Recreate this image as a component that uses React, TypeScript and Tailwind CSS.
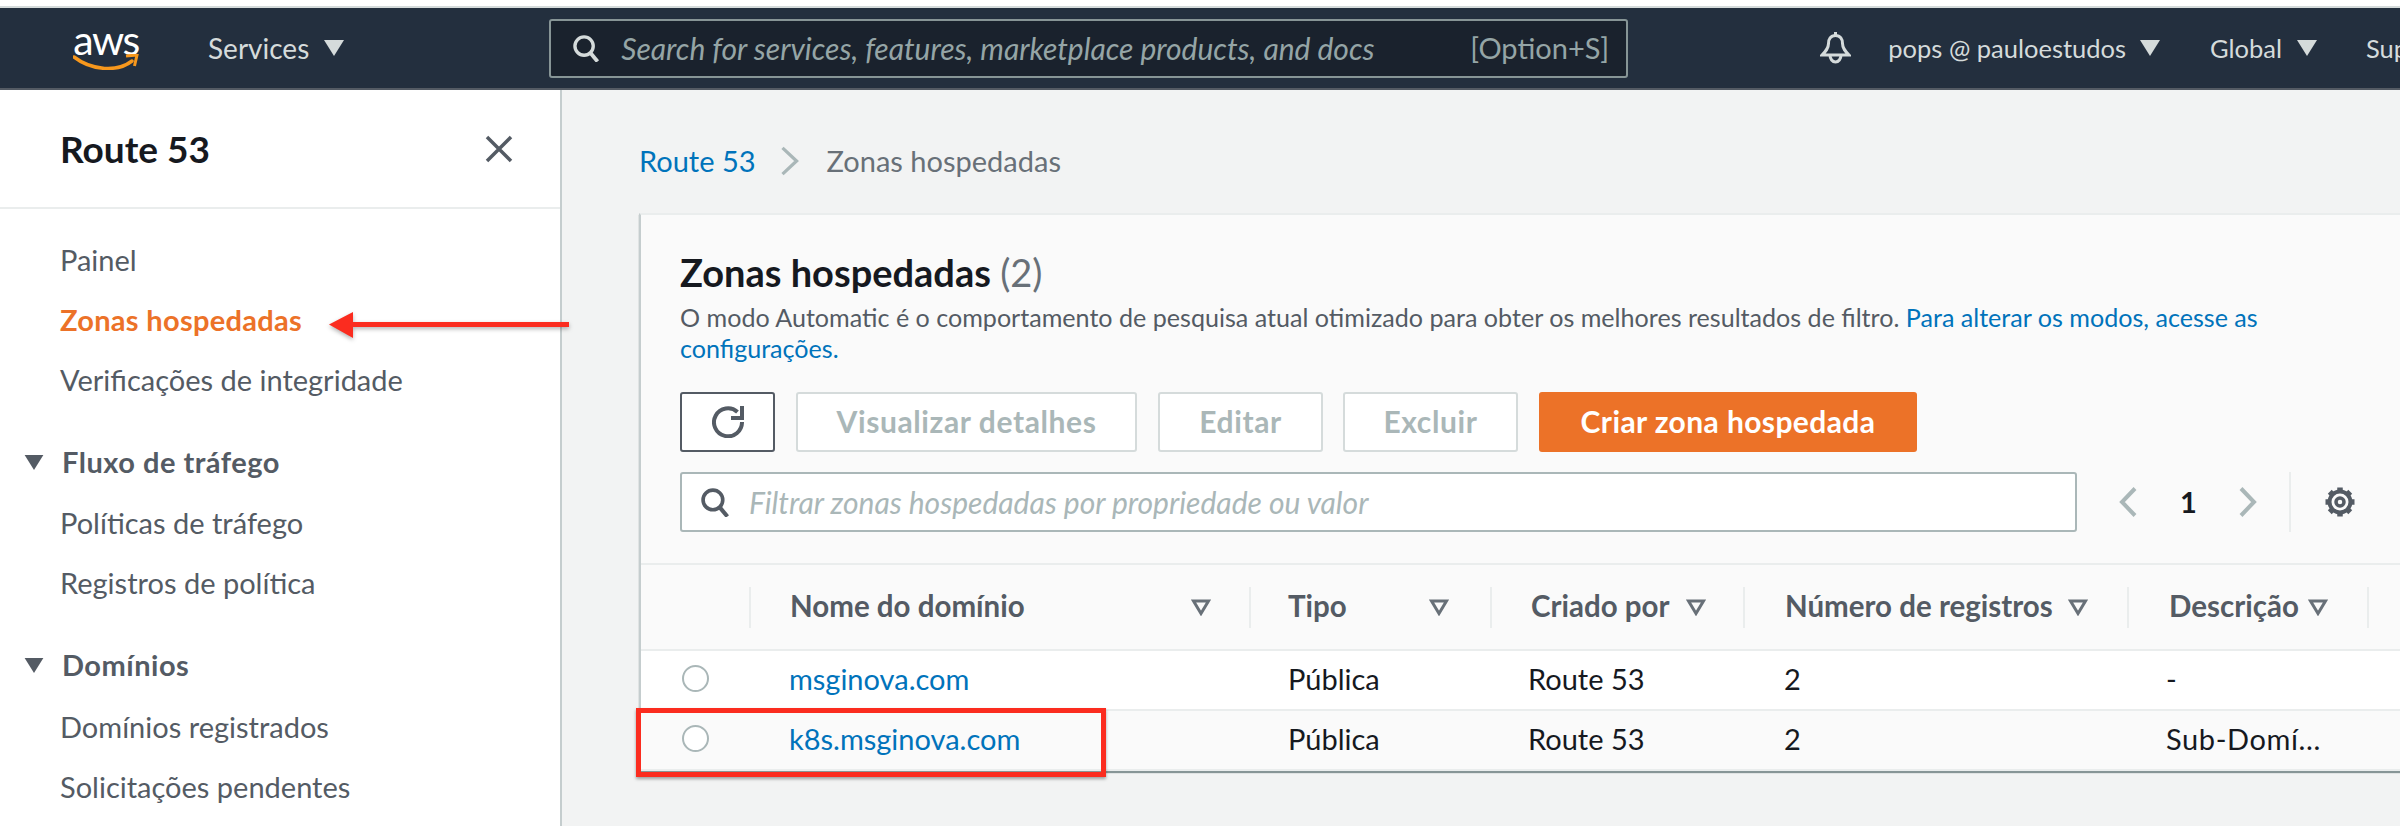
import type { ReactNode } from 'react';

const font = "font-['Lato','Noto_Sans',sans-serif]";

function Caret({ className }: { className: string }) {
  return (
    <svg viewBox="0 0 20 16" className={`shrink-0 ${className}`}>
      <path d="M0 0h20L10 16z" fill="currentColor" />
    </svg>
  );
}

function SearchIcon({ className }: { className: string }) {
  return (
    <svg viewBox="0 0 28 28" className={`shrink-0 ${className}`} fill="none" stroke="currentColor">
      <circle cx="11.5" cy="11.5" r="9.5" strokeWidth="3.500" />
      <path d="M17.500 18l8 9.500" strokeWidth="4" />
    </svg>
  );
}

function FilterCaret({ className }: { className: string }) {
  return (
    <svg viewBox="0 0 20 17" className={className} fill="none" stroke="currentColor" strokeWidth="3">
      <path d="M2.500 2h15L10 14.500z" />
    </svg>
  );
}

function AwsLogo() {
  return (
    <div className="flex w-[66px] flex-col items-center">
      <span className={`${font} text-[41px] leading-[25px] tracking-[-1.5px] text-white`}>aws</span>
      <svg viewBox="0 0 66 16" className="mt-[2px] h-[16px] w-[66px]" fill="none">
        <path d="M1 3c18 14 44 15 58 4" stroke="#f7981d" strokeWidth="3.500" strokeLinecap="round" />
        <path d="M53 2l11-1-2.500 11" stroke="#f7981d" strokeWidth="3" />
      </svg>
    </div>
  );
}

function TopBar() {
  return (
    <header className="flex h-[84px] items-center overflow-hidden border-t-2 border-b-2 border-t-[#d5dbdb] border-b-[#545b64] bg-[#232f3e] text-[#d5dbdb]">
      <div className="ml-[73px]">
        <AwsLogo />
      </div>
      <span className="ml-[69px] shrink-0 text-[28px]">Services</span>
      <Caret className="ml-[15px] h-[16px] w-[20px]" />
      <div className="ml-[205px] flex h-[59px] w-[1079px] shrink-0 items-center rounded-[3px] border-2 border-[#879596] bg-[#1a222d] text-[#95a5a6]">
        <SearchIcon className="ml-[22px] h-[27px] w-[27px] text-[#d5dbdb]" />
        <span className="ml-[21px] w-[849px] shrink-0 whitespace-nowrap text-[30px] italic">
          Search for services, features, marketplace products, and docs
        </span>
        <span className="shrink-0 text-[29px]">[Option+S]</span>
      </div>
      <svg viewBox="0 0 31 32" className="ml-[192px] h-[32px] w-[31px] shrink-0" fill="none" stroke="#d5dbdb" strokeWidth="3">
        <path d="M15.500 0v4M15.500 3.500c-5 0-7 4-7 8 0 5-3 8-6.500 11.500h27c-3.500-3.500-6.500-6.500-6.500-11.500 0-4-2-8-7-8z" />
        <path d="M10 23a5.500 7 0 0 0 11 0" />
      </svg>
      <span className="ml-[37px] shrink-0 text-[25.5px]">pops @ pauloestudos</span>
      <Caret className="ml-[14px] h-[16px] w-[20px]" />
      <span className="ml-[50px] shrink-0 text-[25.5px]">Global</span>
      <Caret className="ml-[15px] h-[16px] w-[20px]" />
      <span className="ml-[49px] shrink-0 text-[25.5px]">Support</span>
    </header>
  );
}

function NavLink({ children, active }: { children: ReactNode; active?: boolean }) {
  return (
    <div className={`flex h-[60px] items-center pl-[60px] text-[29px] ${active ? 'font-bold tracking-[0.3px] text-[#ec7228]' : 'text-[#545b64]'}`}>
      {children}
    </div>
  );
}

function NavSection({ title }: { title: string }) {
  return (
    <div className="flex h-[60px] items-center pl-[24px] text-[#545b64]">
      <Caret className="h-[15px] w-[20px]" />
      <span className="ml-[18px] text-[29px] font-bold tracking-[0.5px]">{title}</span>
    </div>
  );
}

function Sidebar() {
  return (
    <aside className="w-[562px] shrink-0 border-r-2 border-[#c5cdce] bg-white">
      <div className="flex h-[119px] items-center justify-between border-b-2 border-[#eaeded] pl-[60px] pr-[47px]">
        <span className="text-[37px] font-bold text-[#16191f]">Route 53</span>
        <svg viewBox="0 0 28 28" className="h-[28px] w-[28px]" fill="none" stroke="#545b64" strokeWidth="3.500">
          <path d="M2 2l24 24M26 2L2 26" />
        </svg>
      </div>
      <div className="pt-[21px]">
        <NavLink>Painel</NavLink>
        <NavLink active>Zonas hospedadas</NavLink>
        <NavLink>Verificações de integridade</NavLink>
      </div>
      <div className="pt-[22px]">
        <NavSection title="Fluxo de tráfego" />
        <div className="mt-[1px]">
          <NavLink>Políticas de tráfego</NavLink>
          <NavLink>Registros de política</NavLink>
        </div>
      </div>
      <div className="pt-[22px]">
        <NavSection title="Domínios" />
        <div className="mt-[2px]">
          <NavLink>Domínios registrados</NavLink>
          <NavLink>Solicitações pendentes</NavLink>
        </div>
      </div>
    </aside>
  );
}

function ActionButton({ children, className }: { children: ReactNode; className: string }) {
  return (
    <div className={`flex h-[60px] items-center justify-center rounded-[3px] border-2 border-[#d5dbdb] bg-white pb-[2px] text-[30px] font-bold tracking-[0.6px] text-[#aab7b8] ${className}`}>
      {children}
    </div>
  );
}

const gridCols = 'grid grid-cols-[110px_500px_241px_253px_384px_240px_1fr]';

const columns = [
  { label: 'Nome do domínio', labelClass: 'w-[440px] pl-[39px]' },
  { label: 'Tipo', labelClass: 'w-[178px] pl-[37px]' },
  { label: 'Criado por', labelClass: 'w-[194px] pl-[39px]' },
  { label: 'Número de registros', labelClass: 'w-[323px] pl-[40px]' },
  { label: 'Descrição', labelClass: 'w-[179px] pl-[40px]' },
];

const rows = [
  { domain: 'msginova.com', desc: '-', bg: 'bg-white' },
  { domain: 'k8s.msginova.com', desc: 'Sub-Domí...', bg: 'bg-[#fafafa]' },
];

function HostedZonesTable() {
  return (
    <div>
      <div className={`${gridCols} h-[88px] items-center border-y-2 border-[#eaeded] bg-[#fafafa]`}>
        <div className="h-[41px] border-r-2 border-[#eaeded]" />
        {columns.map((col) => (
          <div key={col.label} className="flex h-[41px] items-center border-r-2 border-[#eaeded] text-[#545b64]">
            <span className={`${col.labelClass} shrink-0 whitespace-nowrap pb-[2px] text-[29.5px] font-bold`}>{col.label}</span>
            <FilterCaret className="h-[17px] w-[20px] shrink-0 text-[#687078]" />
          </div>
        ))}
      </div>
      {rows.map((row) => (
        <div key={row.domain} className={`${gridCols} h-[60px] items-center border-b-2 border-[#eaeded] pb-[2px] text-[29px] text-[#16191f] ${row.bg}`}>
          <div className="pl-[41px]">
            <div className="-mt-[2px] h-[27px] w-[27px] rounded-full border-2 border-[#aab7b8] bg-white" />
          </div>
          <span className="pl-[38px] text-[#0073bb]">{row.domain}</span>
          <span className="pl-[37px]">Pública</span>
          <span className="pl-[36px]">Route 53</span>
          <span className="pl-[39px]">2</span>
          <span className="pl-[37px] tracking-[0.6px]">{row.desc}</span>
        </div>
      ))}
    </div>
  );
}

function GearIcon() {
  const teeth = [0, 45, 90, 135, 180, 225, 270, 315];
  return (
    <svg viewBox="0 0 32 32" className="ml-[33px] h-[32px] w-[32px]" fill="none" stroke="#545b64">
      <circle cx="16" cy="16" r="10.500" strokeWidth="4" />
      <circle cx="16" cy="16" r="4" strokeWidth="3.500" />
      {teeth.map((deg) => (
        <path key={deg} d="M16 1.500v4" strokeWidth="5.500" transform={`rotate(${deg} 16 16)`} />
      ))}
    </svg>
  );
}

function HostedZonesPanel() {
  return (
    <section className="w-[1761px] border-t-2 border-l-2 border-t-[#eaeded] border-l-[#c5cdce] bg-[#fafafa] shadow-[0_2px_1px_#879596]">
      <div className="pl-[39px] pt-[35px]">
        <h1 className="whitespace-nowrap text-[38px] leading-[44px] font-bold text-[#16191f]">
          Zonas hospedadas <span className="font-normal text-[#687078]">(2)</span>
        </h1>
        <p className="mt-[8px] w-[1640px] text-[25.1px] leading-[31px] text-[#545b64]">
          O modo Automatic é o comportamento de pesquisa atual otimizado para obter os melhores resultados de filtro.{' '}
          <span className="text-[#0073bb]">Para alterar os modos, acesse as configurações.</span>
        </p>
        <div className="mt-[28px] flex items-center">
          <div className="flex h-[60px] w-[95px] items-center justify-center rounded-[3px] border-2 border-[#545b64] bg-white">
            <svg viewBox="0 0 32 32" className="h-[32px] w-[32px]" fill="none" stroke="#545b64" strokeWidth="4">
              <path d="M25.500 6A14 14 0 1 0 30 16" />
              <path d="M30 0v12H19" />
            </svg>
          </div>
          <ActionButton className="ml-[21px] w-[341px]">Visualizar detalhes</ActionButton>
          <ActionButton className="ml-[21px] w-[165px]">Editar</ActionButton>
          <ActionButton className="ml-[20px] w-[175px]">Excluir</ActionButton>
          <div className="ml-[21px] flex h-[60px] w-[378px] items-center justify-center rounded-[3px] bg-[#ec7228] pb-[2px] text-[30px] font-bold tracking-[0.4px] text-white">
            Criar zona hospedada
          </div>
        </div>
        <div className="mt-[20px] flex h-[60px] items-center">
          <div className="flex h-[60px] w-[1397px] items-center rounded-[3px] border-2 border-[#aab7b8] bg-white text-[#aab7b8]">
            <SearchIcon className="ml-[19px] h-[29px] w-[29px] text-[#545b64]" />
            <span className="ml-[19px] text-[30px] italic">Filtrar zonas hospedadas por propriedade ou valor</span>
          </div>
          <svg viewBox="0 0 18 30" className="ml-[42px] h-[30px] w-[18px]" fill="none" stroke="#aab7b8" strokeWidth="4">
            <path d="M16 1.500L3 15l13 13.500" />
          </svg>
          <span className="ml-[43px] w-[12px] text-[29px] font-bold text-[#16191f]">1</span>
          <svg viewBox="0 0 18 30" className="ml-[47px] h-[30px] w-[18px]" fill="none" stroke="#aab7b8" strokeWidth="4">
            <path d="M2 1.500L15 15 2 28.500" />
          </svg>
          <div className="ml-[32px] h-[60px] w-[2px] bg-[#eaeded]" />
          <GearIcon />
        </div>
      </div>
      <div className="mt-[31px]">
        <HostedZonesTable />
      </div>
    </section>
  );
}

export default function App() {
  return (
    <div className={`${font} relative h-[826px] w-[2400px] overflow-hidden bg-white`}>
      <div className="h-[6px] bg-white" />
      <TopBar />
      <div className="flex h-[736px]">
        <Sidebar />
        <main className="flex-1 overflow-hidden bg-[#f2f3f3] pl-[77px]">
          <div className="flex h-[123px] items-center pt-[19px] text-[29px]">
            <span className="text-[#0073bb]">Route 53</span>
            <svg viewBox="0 0 20 32" className="ml-[24px] h-[30px] w-[20px]" fill="none" stroke="#aab7b8" strokeWidth="3.500">
              <path d="M2 2l15 14L2 30" />
            </svg>
            <span className="ml-[27px] text-[#687078]">Zonas hospedadas</span>
          </div>
          <HostedZonesPanel />
        </main>
      </div>

      {/* anotacoes em vermelho */}
      <svg viewBox="0 0 244 26" className="absolute top-[312px] left-[327px] h-[26px] w-[244px] drop-shadow-[0_2px_2px_rgba(0,0,0,0.3)]">
        <path d="M2 12.500L26 0v10h216v5H26v11z" fill="#fb2c1f" />
      </svg>
      <div className="absolute top-[708px] left-[636px] h-[69px] w-[470px] border-[5px] border-[#fb2c1f] shadow-[0_2px_3px_rgba(0,0,0,0.35)]" />
    </div>
  );
}
